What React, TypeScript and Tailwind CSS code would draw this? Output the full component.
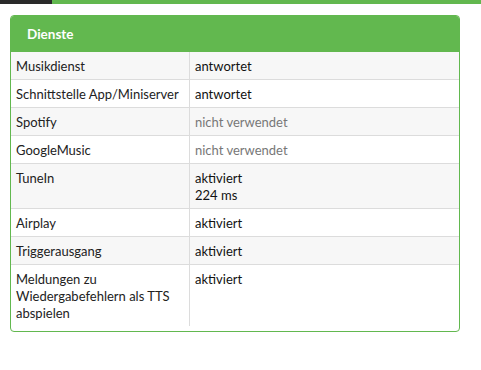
const ROWS: { label: string; value: string[]; muted?: boolean }[] = [
  { label: "Musikdienst", value: ["antwortet"] },
  { label: "Schnittstelle App/Miniserver", value: ["antwortet"] },
  { label: "Spotify", value: ["nicht verwendet"], muted: true },
  { label: "GoogleMusic", value: ["nicht verwendet"], muted: true },
  { label: "TuneIn", value: ["aktiviert", "224 ms"] },
  { label: "Airplay", value: ["aktiviert"] },
  { label: "Triggerausgang", value: ["aktiviert"] },
  { label: "Meldungen zu Wiedergabefehlern als TTS abspielen", value: ["aktiviert"] },
];

export default function App() {
  return (
    <div className="h-[370px] w-[481px] bg-white font-['Lato','Liberation_Sans',sans-serif] text-[13px] leading-[17px] text-[#222]">
      {/* top strip */}
      <div className="flex h-[4px]">
        <div className="w-[52px] bg-[#2a2a2a]" />
        <div className="flex-1 bg-[#62b84f]" />
      </div>

      <div className="px-[10px] pt-[11px]">
        <div className="w-[450px] overflow-hidden rounded-[4px] border border-[#62b84f] pb-[5px]">
          <div className="flex h-[36px] items-center bg-[#62b84f] px-[16px] text-[13.5px] font-bold text-white">
            Dienste
          </div>

          {ROWS.map((row, i) => (
            <div
              key={row.label}
              className={`flex ${i < ROWS.length - 1 ? "border-b border-[#dcdcdc]" : ""} ${i % 2 === 0 ? "bg-[#f7f7f7]" : "bg-white"}`}
            >
              <div className="w-[179px] border-r border-[#dcdcdc] px-[5px] pt-[6px] pb-[4px]">{row.label}</div>
              <div className={`flex-1 px-[5px] pt-[6px] pb-[4px] ${row.muted ? "text-[#777]" : "text-[#111]"}`}>
                {row.value.map((v) => (
                  <div key={v}>{v}</div>
                ))}
              </div>
            </div>
          ))}
        </div>
      </div>
    </div>
  );
}
